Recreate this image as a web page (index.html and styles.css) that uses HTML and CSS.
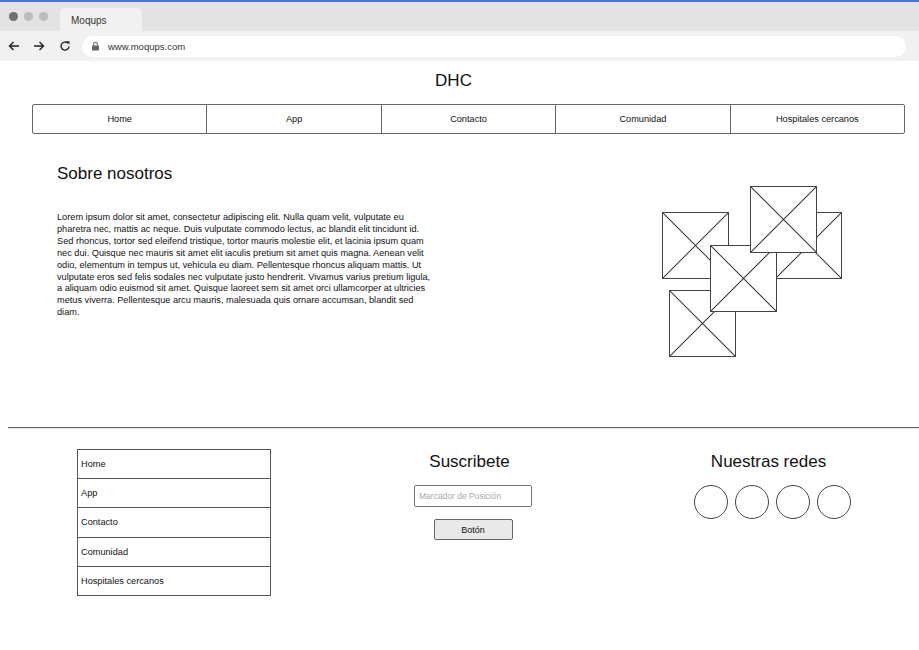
FILE: index.html
```html
<!DOCTYPE html>
<html lang="es">
<head>
<meta charset="utf-8">
<title>Moqups</title>
<link rel="stylesheet" href="styles.css">
</head>
<body>
<div class="chrome">
  <div class="topline"></div>
  <div class="tabbar">
    <div class="dots"><span class="dot dark"></span><span class="dot"></span><span class="dot"></span></div>
    <div class="tab">Moqups</div>
  </div>
  <div class="addressbar">
    <svg class="ico" width="14" height="14" viewBox="0 0 14 14"><path d="M12 7H2.5M6.5 3L2.5 7l4 4" fill="none" stroke="#222" stroke-width="1.4"/></svg>
    <svg class="ico" width="14" height="14" viewBox="0 0 14 14"><path d="M2 7h9.5M7.5 3l4 4-4 4" fill="none" stroke="#222" stroke-width="1.4"/></svg>
    <svg class="ico reload" width="14" height="14" viewBox="0 0 14 14"><path d="M11 7.5A4 4 0 1 1 9.8 4.2" fill="none" stroke="#222" stroke-width="1.4"/><path d="M8.2 2.3h3.3v3.3z" fill="#222"/></svg>
    <div class="url">
      <svg class="lock" width="9" height="10" viewBox="0 0 9 10"><rect x="1" y="4.5" width="7" height="5" rx="0.8" fill="#666"/><path d="M2.6 4.8V3.2a1.9 1.9 0 0 1 3.8 0v1.6" fill="none" stroke="#666" stroke-width="1.1"/></svg>
      <span>www.moqups.com</span>
    </div>
  </div>
</div>

<div class="page">
  <h1 class="brand">DHC</h1>
  <nav class="topnav">
    <div class="navcell">Home</div>
    <div class="navcell">App</div>
    <div class="navcell">Contacto</div>
    <div class="navcell">Comunidad</div>
    <div class="navcell">Hospitales cercanos</div>
  </nav>

  <section class="about">
    <div class="about-text">
      <h2 class="about-title">Sobre nosotros</h2>
      <p class="lorem">Lorem ipsum dolor sit amet, consectetur adipiscing elit. Nulla quam velit, vulputate eu pharetra nec, mattis ac neque. Duis vulputate commodo lectus, ac blandit elit tincidunt id. Sed rhoncus, tortor sed eleifend tristique, tortor mauris molestie elit, et lacinia ipsum quam nec dui. Quisque nec mauris sit amet elit iaculis pretium sit amet quis magna. Aenean velit odio, elementum in tempus ut, vehicula eu diam. Pellentesque rhoncus aliquam mattis. Ut vulputate eros sed felis sodales nec vulputate justo hendrerit. Vivamus varius pretium ligula, a aliquam odio euismod sit amet. Quisque laoreet sem sit amet orci ullamcorper at ultricies metus viverra. Pellentesque arcu mauris, malesuada quis ornare accumsan, blandit sed diam.</p>
    </div>
    <div class="gallery">
      <div class="ph ph-c"><svg viewBox="0 0 66 66" preserveAspectRatio="none"><path d="M0 0L66 66M66 0L0 66"/></svg></div>
      <div class="ph ph-a"><svg viewBox="0 0 66 66" preserveAspectRatio="none"><path d="M0 0L66 66M66 0L0 66"/></svg></div>
      <div class="ph ph-b"><svg viewBox="0 0 66 66" preserveAspectRatio="none"><path d="M0 0L66 66M66 0L0 66"/></svg></div>
      <div class="ph ph-e"><svg viewBox="0 0 66 66" preserveAspectRatio="none"><path d="M0 0L66 66M66 0L0 66"/></svg></div>
      <div class="ph ph-d"><svg viewBox="0 0 66 66" preserveAspectRatio="none"><path d="M0 0L66 66M66 0L0 66"/></svg></div>
    </div>
  </section>

  <hr class="divider">

  <footer class="footer">
    <ul class="footnav">
      <li>Home</li>
      <li>App</li>
      <li>Contacto</li>
      <li>Comunidad</li>
      <li>Hospitales cercanos</li>
    </ul>
    <div class="subscribe">
      <h3 class="ftitle">Suscribete</h3>
      <input class="field" type="text" placeholder="Marcador de Posición">
      <button class="btn">Botón</button>
    </div>
    <div class="social">
      <h3 class="ftitle">Nuestras redes</h3>
      <div class="circles"><span class="circle"></span><span class="circle"></span><span class="circle"></span><span class="circle"></span></div>
    </div>
  </footer>
</div>
</body>
</html>
```
FILE: styles.css
```css
* { box-sizing: border-box; }
html, body { margin: 0; padding: 0; background: #fff; }
body { font-family: "Liberation Sans", Arial, sans-serif; color: #111; width: 919px; height: 650px; overflow: hidden; }

.topline { height: 2px; background: #4c6fdc; }
.tabbar { height: 29px; background: #e3e3e3; display: flex; align-items: flex-end; }
.dots { display: flex; gap: 6px; padding: 0 0 10px 9px; width: 60px; }
.dot { width: 9px; height: 9px; border-radius: 50%; background: #bcbcbc; }
.dot.dark { background: #707070; }
.tab { width: 82px; height: 23px; background: #f1f1f1; border-radius: 5px 5px 0 0; font-size: 10px; color: #333; padding: 7px 0 0 11px; }

.addressbar { height: 30px; background: #f1f1f1; display: flex; align-items: center; padding: 0 13px 0 7px; }
.ico { margin-right: 11px; flex: none; }
.ico.reload { margin-left: 1px; margin-right: 10px; }
.url { flex: 1; height: 21px; background: #fff; border-radius: 11px; display: flex; align-items: center; padding-left: 9px; font-size: 9.5px; color: #333; }
.lock { margin-right: 8px; }

.page { position: relative; }
.brand { margin: 10px 12px 0 0; text-align: center; font-size: 17px; font-weight: normal; line-height: 20px; color: #111; }
.topnav { display: flex; margin: 13px 14px 0 32px; height: 30px; border: 1px solid #666; border-radius: 2px; }
.navcell { flex: 1; display: flex; align-items: center; justify-content: center; font-size: 9.2px; color: #111; border-left: 1px solid #666; }
.navcell:first-child { border-left: none; }

.about { display: flex; justify-content: space-between; height: 293px; }
.about-text { margin-left: 57px; width: 378px; }
.about-title { margin: 30px 0 0; font-size: 17px; font-weight: normal; line-height: 20px; color: #111; }
.lorem { margin: 28px 0 0; font-size: 9.2px; line-height: 11.9px; color: #111; }

.gallery { position: relative; width: 257px; margin-top: 52px; }
.ph { position: absolute; width: 67px; height: 67px; background: #fff; border: 1px solid #444; }
.ph svg { display: block; width: 100%; height: 100%; }
.ph path { stroke: #333; stroke-width: 1; fill: none; vector-effect: non-scaling-stroke; }
.ph-a { left: 0; top: 26px; }
.ph-b { left: 113px; top: 26px; }
.ph-c { left: 7px; top: 104px; }
.ph-d { left: 88px; top: 0; }
.ph-e { left: 48px; top: 59px; }

.divider { margin: 0 0 0 8px; border: none; border-top: 1px solid #666; border-bottom: 1px solid #e4e4e4; height: 0; }

.footer { display: flex; align-items: flex-start; padding-top: 20px; }
.footnav { list-style: none; margin: 0 0 0 77px; padding: 0; width: 194px; border: 1px solid #555; border-top: none; }
.footnav li { height: 29.2px; border-top: 1px solid #555; font-size: 9.2px; padding-left: 3px; display: flex; align-items: center; color: #111; }
.subscribe { margin-left: 143px; width: 118px; display: flex; flex-direction: column; align-items: center; }
.ftitle { margin: 3px 0 0; font-size: 17px; font-weight: normal; line-height: 20px; color: #111; white-space: nowrap; }
.subscribe .ftitle { margin-left: -7px; }
.field { margin-top: 13px; width: 118px; height: 22px; border: 1px solid #777; border-radius: 2px; font-family: inherit; font-size: 8.5px; padding: 0 4px; }
.field::placeholder { color: #aaa; }
.btn { margin-top: 12px; width: 79px; height: 21px; background: #e9e9e9; border: 1px solid #666; border-radius: 2px; font-family: inherit; font-size: 9px; color: #111; padding: 0; }
.social { margin-left: 161px; width: 158px; display: flex; flex-direction: column; align-items: center; }
.social .ftitle { margin-left: -7px; }
.circles { display: flex; gap: 7px; margin-top: 13px; }
.circle { width: 34px; height: 34px; border: 1px solid #444; border-radius: 50%; }
```
